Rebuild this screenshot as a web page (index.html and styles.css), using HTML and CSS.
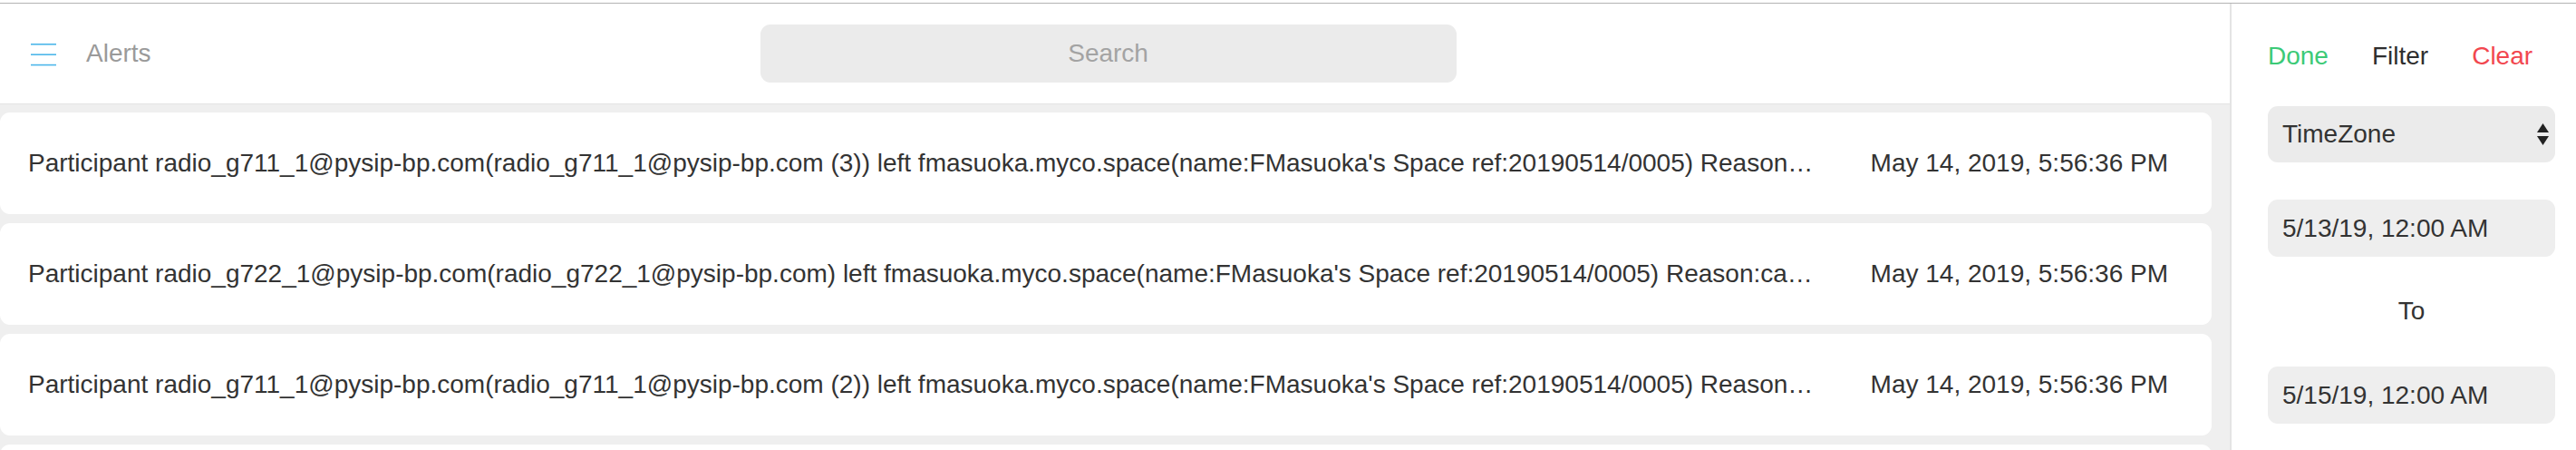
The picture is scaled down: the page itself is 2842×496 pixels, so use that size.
FILE: index.html
```html
<!DOCTYPE html>
<html lang="en">
<head>
<meta charset="utf-8">
<title>Alerts</title>
<link rel="stylesheet" href="styles.css">
</head>
<body>
<div class="app">
  <section class="main">
    <header class="header">
      <svg class="menu-icon" width="28" height="26" viewBox="0 0 28 26" aria-hidden="true">
        <rect x="0" y="1" width="28" height="1.6" fill="#4db7ea"/>
        <rect x="0" y="12.4" width="28" height="1.6" fill="#4db7ea"/>
        <rect x="0" y="23.8" width="28" height="1.6" fill="#4db7ea"/>
      </svg>
      <span class="title">Alerts</span>
      <input class="search" type="text" placeholder="Search">
    </header>
    <div class="list">
      <div class="card">
        <span class="msg">Participant radio_g711_1@pysip-bp.com(radio_g711_1@pysip-bp.com (3)) left fmasuoka.myco.space(name:FMasuoka's Space ref:20190514/0005) Reason:call ended by participant</span>
        <span class="time">May 14, 2019, 5:56:36 PM</span>
      </div>
      <div class="card">
        <span class="msg">Participant radio_g722_1@pysip-bp.com(radio_g722_1@pysip-bp.com) left fmasuoka.myco.space(name:FMasuoka's Space ref:20190514/0005) Reason:call ended by participant</span>
        <span class="time">May 14, 2019, 5:56:36 PM</span>
      </div>
      <div class="card">
        <span class="msg">Participant radio_g711_1@pysip-bp.com(radio_g711_1@pysip-bp.com (2)) left fmasuoka.myco.space(name:FMasuoka's Space ref:20190514/0005) Reason:call ended by participant</span>
        <span class="time">May 14, 2019, 5:56:36 PM</span>
      </div>
      <div class="card">
        <span class="msg">Participant radio_g711_1@pysip-bp.com(radio_g711_1@pysip-bp.com (1)) left fmasuoka.myco.space(name:FMasuoka's Space ref:20190514/0005) Reason:call ended by participant</span>
        <span class="time">May 14, 2019, 5:56:36 PM</span>
      </div>
    </div>
  </section>
  <aside class="panel">
    <div class="panel-header">
      <span class="done">Done</span>
      <span class="filter">Filter</span>
      <span class="clear">Clear</span>
    </div>
    <div class="field select">
      <span>TimeZone</span>
      <svg class="arrows" width="13" height="25" viewBox="0 0 13 25" aria-hidden="true">
        <polygon points="6.5,0 13,10 0,10" fill="#222"/>
        <polygon points="0,14 13,14 6.5,24" fill="#222"/>
      </svg>
    </div>
    <div class="field date">5/13/19, 12:00 AM</div>
    <div class="to">To</div>
    <div class="field date">5/15/19, 12:00 AM</div>
  </aside>
</div>
</body>
</html>
```

FILE: styles.css
```css
html, body {
  margin: 0;
  padding: 0;
  background: #ffffff;
  height: 100%;
  overflow: hidden;
}

body {
  font-family: "Liberation Sans", Arial, Helvetica, sans-serif;
  font-size: 28px;
  color: #333333;
}

.app {
  margin-top: 3px;
  border-top: 1px solid #b3b3b3;
  display: flex;
  height: 492px;
  overflow: hidden;
}

.main {
  width: 2460px;
  flex: none;
  display: flex;
  flex-direction: column;
  overflow: hidden;
}

.header {
  flex: none;
  height: 111px;
  border-bottom: 1px solid #e3e3e3;
  display: flex;
  align-items: center;
  padding-left: 34px;
  box-sizing: border-box;
}

.menu-icon {
  display: block;
  flex: none;
  margin-top: 2px;
}

.title {
  margin-left: 33px;
  color: #9a9a9a;
  line-height: 34px;
}

.search {
  flex: none;
  margin-left: 672px;
  width: 768px;
  height: 64px;
  border: none;
  border-radius: 11px;
  background: #ebebeb;
  font-family: inherit;
  font-size: 28px;
  text-align: center;
  color: #333;
  padding: 0;
  outline: none;
}

.search::placeholder {
  color: #a3a3a3;
}

.list {
  flex: 1;
  min-height: 0;
  overflow: hidden;
  background: #efefef;
  padding: 9px 20px 0 0;
  display: flex;
  flex-direction: column;
  gap: 10px;
}

.card {
  background: #ffffff;
  border-radius: 11px;
  height: 112px;
  flex: none;
  display: flex;
  align-items: center;
  padding: 0 48px 0 31px;
  box-sizing: border-box;
}

.msg {
  flex: 1;
  min-width: 0;
  white-space: nowrap;
  overflow: hidden;
  text-overflow: ellipsis;
  margin-right: 60px;
}

.time {
  flex: none;
  white-space: nowrap;
}

.panel {
  flex: 1;
  border-left: 2px solid #e4e4e4;
  padding-left: 40px;
}

.panel-header {
  display: flex;
  gap: 48px;
  padding-top: 40px;
  padding-bottom: 37px;
  line-height: 36px;
}

.done {
  color: #3cca77;
}

.filter {
  color: #2e2e2e;
}

.clear {
  color: #f2474f;
}

.field {
  width: 317px;
  height: 63px;
  border-radius: 11px;
  box-sizing: border-box;
  padding-left: 16px;
  display: flex;
  align-items: center;
}

.select {
  height: 62px;
  background: #ebebeb;
  justify-content: space-between;
  padding-right: 7px;
}

.arrows {
  display: block;
}

.date {
  background: #eeeeee;
  margin-top: 41px;
}

.to {
  width: 317px;
  text-align: center;
  line-height: 40px;
  margin: 40px 0 41px;
}

.to + .date {
  margin-top: 0;
}
```
